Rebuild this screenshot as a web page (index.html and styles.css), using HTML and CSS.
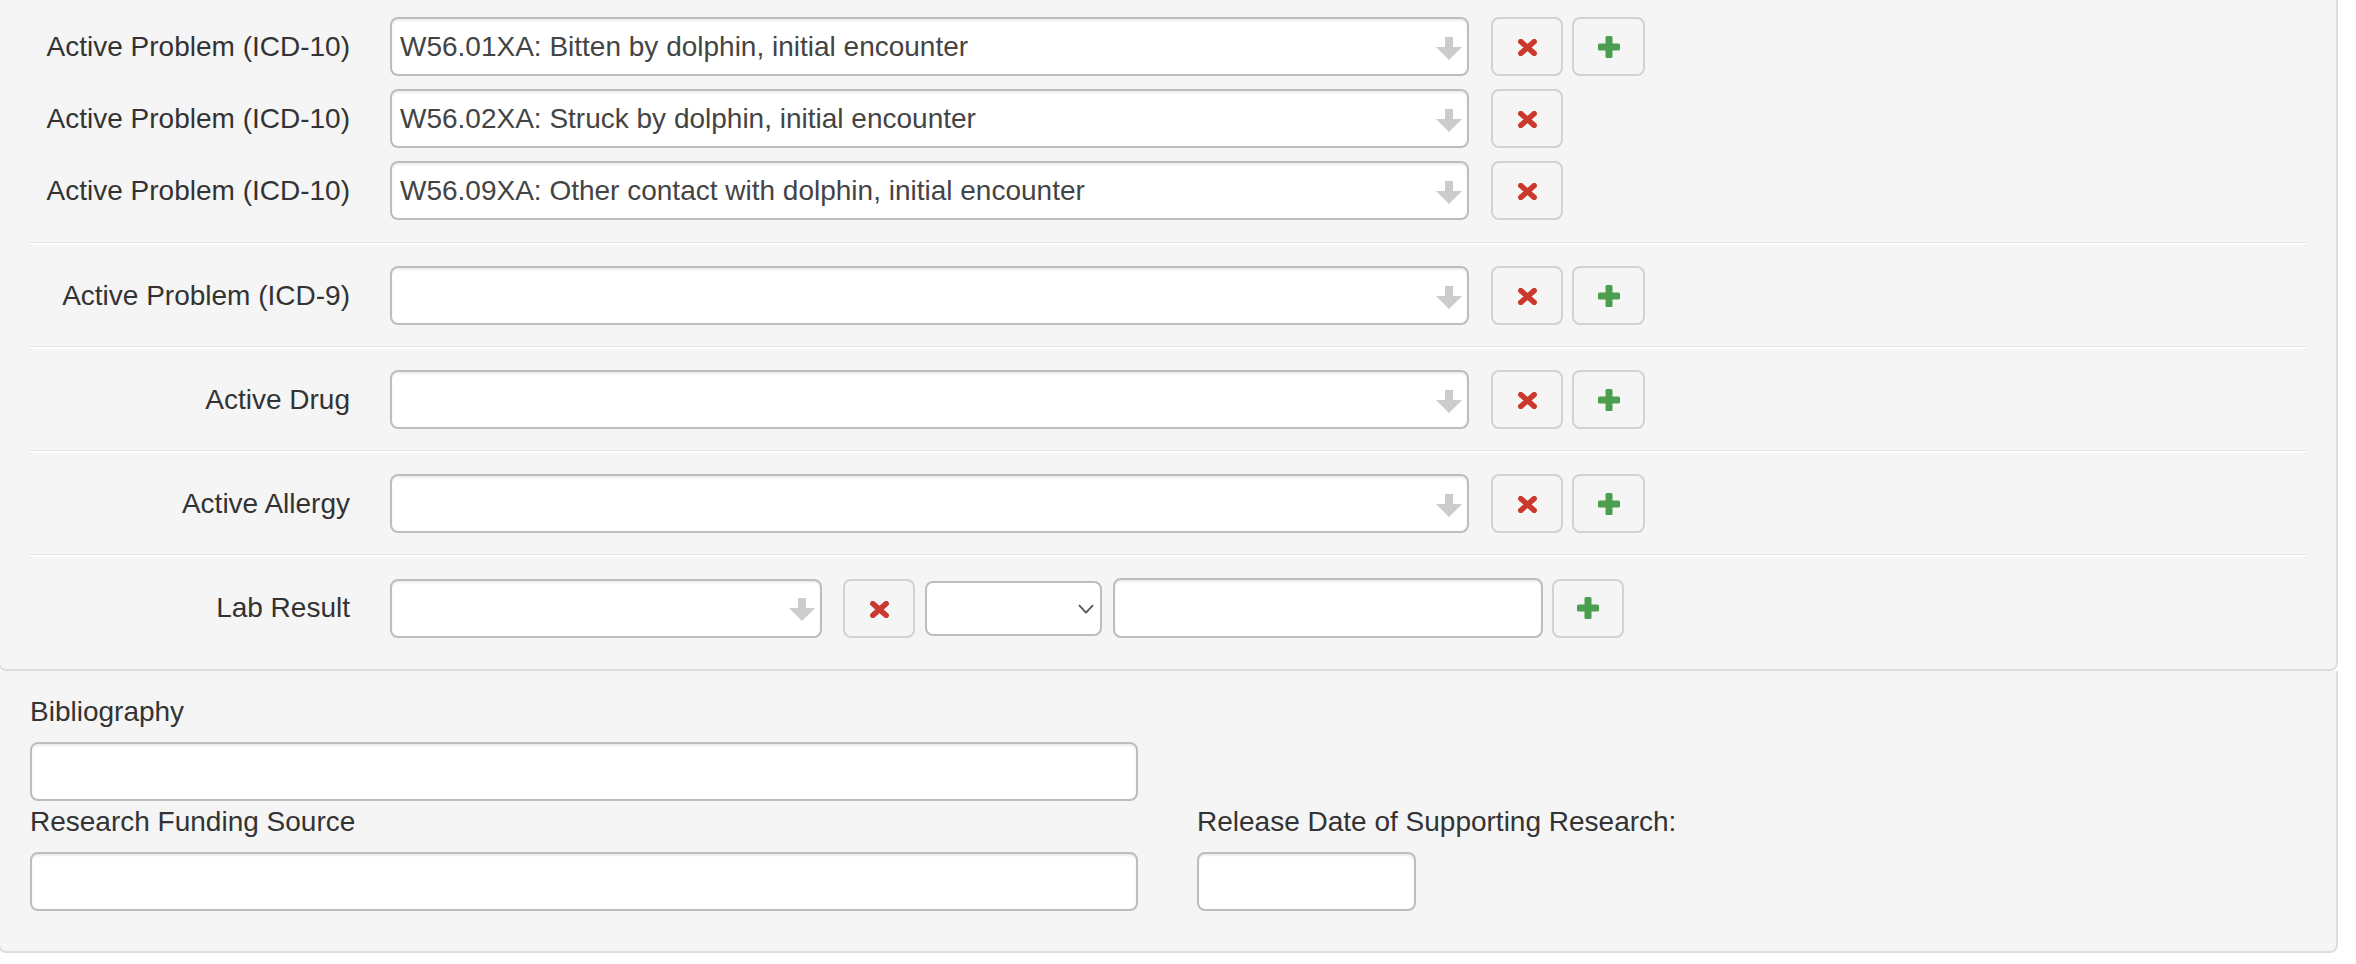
FILE: index.html
```html
<!DOCTYPE html>
<html lang="en">
<head>
<meta charset="utf-8">
<title>Criteria</title>
<link rel="stylesheet" href="styles.css">
</head>
<body>
<div class="panel panel-top">
  <div class="group">
    <div class="row">
      <label class="row-label">Active Problem (ICD-10)</label>
      <div class="s2 s2-wide"><span class="s2-text">W56.01XA: Bitten by dolphin, initial encounter</span><svg class="s2-arrow" viewBox="0 0 26 23" width="26" height="23"><path d="M9 0h8v10h9l-13 13l-13-13h9z"/></svg></div>
      <button class="btn btn-del"><svg class="ico-x" viewBox="0 0 19 17" width="19" height="17"><path d="M2.8 2.6L16.2 14.4M16.2 2.6L2.8 14.4"/></svg></button>
      <button class="btn btn-add"><svg class="ico-plus" viewBox="0 0 22 22" width="22" height="22"><rect x="7.5" y="0" width="7" height="22" rx="1.5"/><rect x="0" y="7.5" width="22" height="7" rx="1.5"/></svg></button>
    </div>
    <div class="row">
      <label class="row-label">Active Problem (ICD-10)</label>
      <div class="s2 s2-wide"><span class="s2-text">W56.02XA: Struck by dolphin, initial encounter</span><svg class="s2-arrow" viewBox="0 0 26 23" width="26" height="23"><path d="M9 0h8v10h9l-13 13l-13-13h9z"/></svg></div>
      <button class="btn btn-del"><svg class="ico-x" viewBox="0 0 19 17" width="19" height="17"><path d="M2.8 2.6L16.2 14.4M16.2 2.6L2.8 14.4"/></svg></button>
    </div>
    <div class="row">
      <label class="row-label">Active Problem (ICD-10)</label>
      <div class="s2 s2-wide"><span class="s2-text">W56.09XA: Other contact with dolphin, initial encounter</span><svg class="s2-arrow" viewBox="0 0 26 23" width="26" height="23"><path d="M9 0h8v10h9l-13 13l-13-13h9z"/></svg></div>
      <button class="btn btn-del"><svg class="ico-x" viewBox="0 0 19 17" width="19" height="17"><path d="M2.8 2.6L16.2 14.4M16.2 2.6L2.8 14.4"/></svg></button>
    </div>
  </div>

  <hr class="sep">
  <div class="row row-section">
    <label class="row-label">Active Problem (ICD-9)</label>
    <div class="s2 s2-wide"><span class="s2-text"></span><svg class="s2-arrow" viewBox="0 0 26 23" width="26" height="23"><path d="M9 0h8v10h9l-13 13l-13-13h9z"/></svg></div>
    <button class="btn btn-del"><svg class="ico-x" viewBox="0 0 19 17" width="19" height="17"><path d="M2.8 2.6L16.2 14.4M16.2 2.6L2.8 14.4"/></svg></button>
    <button class="btn btn-add"><svg class="ico-plus" viewBox="0 0 22 22" width="22" height="22"><rect x="7.5" y="0" width="7" height="22" rx="1.5"/><rect x="0" y="7.5" width="22" height="7" rx="1.5"/></svg></button>
  </div>

  <hr class="sep">
  <div class="row row-section">
    <label class="row-label">Active Drug</label>
    <div class="s2 s2-wide"><span class="s2-text"></span><svg class="s2-arrow" viewBox="0 0 26 23" width="26" height="23"><path d="M9 0h8v10h9l-13 13l-13-13h9z"/></svg></div>
    <button class="btn btn-del"><svg class="ico-x" viewBox="0 0 19 17" width="19" height="17"><path d="M2.8 2.6L16.2 14.4M16.2 2.6L2.8 14.4"/></svg></button>
    <button class="btn btn-add"><svg class="ico-plus" viewBox="0 0 22 22" width="22" height="22"><rect x="7.5" y="0" width="7" height="22" rx="1.5"/><rect x="0" y="7.5" width="22" height="7" rx="1.5"/></svg></button>
  </div>

  <hr class="sep">
  <div class="row row-section">
    <label class="row-label">Active Allergy</label>
    <div class="s2 s2-wide"><span class="s2-text"></span><svg class="s2-arrow" viewBox="0 0 26 23" width="26" height="23"><path d="M9 0h8v10h9l-13 13l-13-13h9z"/></svg></div>
    <button class="btn btn-del"><svg class="ico-x" viewBox="0 0 19 17" width="19" height="17"><path d="M2.8 2.6L16.2 14.4M16.2 2.6L2.8 14.4"/></svg></button>
    <button class="btn btn-add"><svg class="ico-plus" viewBox="0 0 22 22" width="22" height="22"><rect x="7.5" y="0" width="7" height="22" rx="1.5"/><rect x="0" y="7.5" width="22" height="7" rx="1.5"/></svg></button>
  </div>

  <hr class="sep">
  <div class="row row-section row-last">
    <label class="row-label">Lab Result</label>
    <div class="s2 s2-lab"><span class="s2-text"></span><svg class="s2-arrow" viewBox="0 0 26 23" width="26" height="23"><path d="M9 0h8v10h9l-13 13l-13-13h9z"/></svg></div>
    <button class="btn btn-del btn-del-lab"><svg class="ico-x" viewBox="0 0 19 17" width="19" height="17"><path d="M2.8 2.6L16.2 14.4M16.2 2.6L2.8 14.4"/></svg></button>
    <div class="native-select"><svg class="chev" viewBox="0 0 16 10" width="16" height="10"><path d="M1 1.2L8 8.6L15 1.2"/></svg></div>
    <input class="field-input lab-value" type="text">
    <button class="btn btn-add btn-add-lab"><svg class="ico-plus" viewBox="0 0 22 22" width="22" height="22"><rect x="7.5" y="0" width="7" height="22" rx="1.5"/><rect x="0" y="7.5" width="22" height="7" rx="1.5"/></svg></button>
  </div>
</div>

<div class="panel panel-bottom">
  <div class="meta-grid">
    <div class="field field-bib">
      <label class="field-label">Bibliography</label>
      <input class="field-input" type="text">
    </div>
    <div class="field field-fund">
      <label class="field-label">Research Funding Source</label>
      <input class="field-input" type="text">
    </div>
    <div class="field field-date">
      <label class="field-label">Release Date of Supporting Research:</label>
      <input class="field-input date-input" type="text">
    </div>
  </div>
</div>
</body>
</html>
```

FILE: styles.css
```css
* {
  box-sizing: border-box;
}

html, body {
  margin: 0;
  padding: 0;
  background: #ffffff;
}

body {
  font-family: "Liberation Sans", Arial, Helvetica, sans-serif;
  font-size: 28px;
  color: #333333;
}

.panel {
  background: #f5f5f5;
  border: 2px solid #dddddd;
  border-top: none;
  margin-left: -2px;
  width: 2340px;
}

.panel-top {
  border-radius: 0 0 8px 8px;
}

.panel-bottom {
  border-radius: 0 0 8px 8px;
  padding: 25px 30px 40px 30px;
}

.group {
  display: flex;
  flex-direction: column;
  gap: 13px;
  padding-top: 17px;
  padding-bottom: 22px;
}

.row {
  display: flex;
  align-items: center;
  padding-left: 30px;
}

.row-section {
  padding-top: 21px;
  padding-bottom: 21px;
}

.row-last {
  padding-bottom: 31px;
}

.row-label {
  width: 320px;
  margin-right: 40px;
  text-align: right;
  line-height: 32px;
  color: #333333;
  white-space: nowrap;
}

.sep {
  display: block;
  height: 0;
  margin: 0 30px 0 30px;
  border: none;
  border-top: 1px solid #e6e6e6;
  border-bottom: 2px solid #ffffff;
}

.s2 {
  height: 59px;
  background: #ffffff;
  border: 2px solid #bdbdbd;
  border-radius: 8px;
  box-shadow: inset 0 2px 2px rgba(0, 0, 0, 0.07);
  display: flex;
  align-items: center;
  padding: 0 5px 0 8px;
}

.s2-wide {
  width: 1079px;
}

.s2-lab {
  width: 432px;
}

.s2-text {
  flex: 1;
  color: #444444;
  line-height: 32px;
  white-space: nowrap;
  overflow: hidden;
}

.s2-arrow {
  flex: none;
  margin-top: 3px;
  fill: #cccccc;
}

.btn {
  appearance: none;
  -webkit-appearance: none;
  height: 59px;
  width: 72px;
  padding: 0;
  background: transparent;
  border: 2px solid #d2d2d2;
  border-radius: 8px;
  display: flex;
  align-items: center;
  justify-content: center;
  flex: none;
}

.btn-del {
  margin-left: 22px;
}

.btn-add {
  margin-left: 9px;
  width: 73px;
}

.btn-del-lab {
  margin-left: 21px;
}

.btn-add-lab {
  width: 72px;
}

.ico-x {
  margin-top: 2px;
  fill: none;
  stroke: #c9392f;
  stroke-width: 5.4;
  stroke-linecap: round;
}

.ico-plus {
  fill: #4b9e4f;
}

.native-select {
  margin-left: 10px;
  width: 177px;
  height: 55px;
  background: #ffffff;
  border: 2px solid #bdbdbd;
  border-radius: 8px;
  display: flex;
  align-items: center;
  justify-content: flex-end;
  padding-right: 6px;
  flex: none;
}

.chev {
  margin-top: 2px;
  fill: none;
  stroke: #555555;
  stroke-width: 1.8;
}

.field-input {
  display: block;
  height: 59px;
  background: #ffffff;
  border: 2px solid #bdbdbd;
  border-radius: 8px;
  box-shadow: inset 0 2px 2px rgba(0, 0, 0, 0.07);
  padding: 0 12px;
  font-family: inherit;
  font-size: 28px;
  color: #444444;
  margin: 0;
  outline: none;
}

.lab-value {
  margin-left: 11px;
  width: 430px;
  height: 60px;
  flex: none;
}

.meta-grid {
  display: grid;
  grid-template-columns: 1108px auto;
  column-gap: 59px;
  row-gap: 5px;
}

.field-bib {
  grid-column: 1;
  grid-row: 1;
}

.field-fund {
  grid-column: 1;
  grid-row: 2;
}

.field-date {
  grid-column: 2;
  grid-row: 2;
}

.field-label {
  display: block;
  line-height: 32px;
  margin-bottom: 14px;
  color: #333333;
  white-space: nowrap;
}

.field-bib .field-input,
.field-fund .field-input {
  width: 1108px;
}

.date-input {
  width: 219px;
}
```
